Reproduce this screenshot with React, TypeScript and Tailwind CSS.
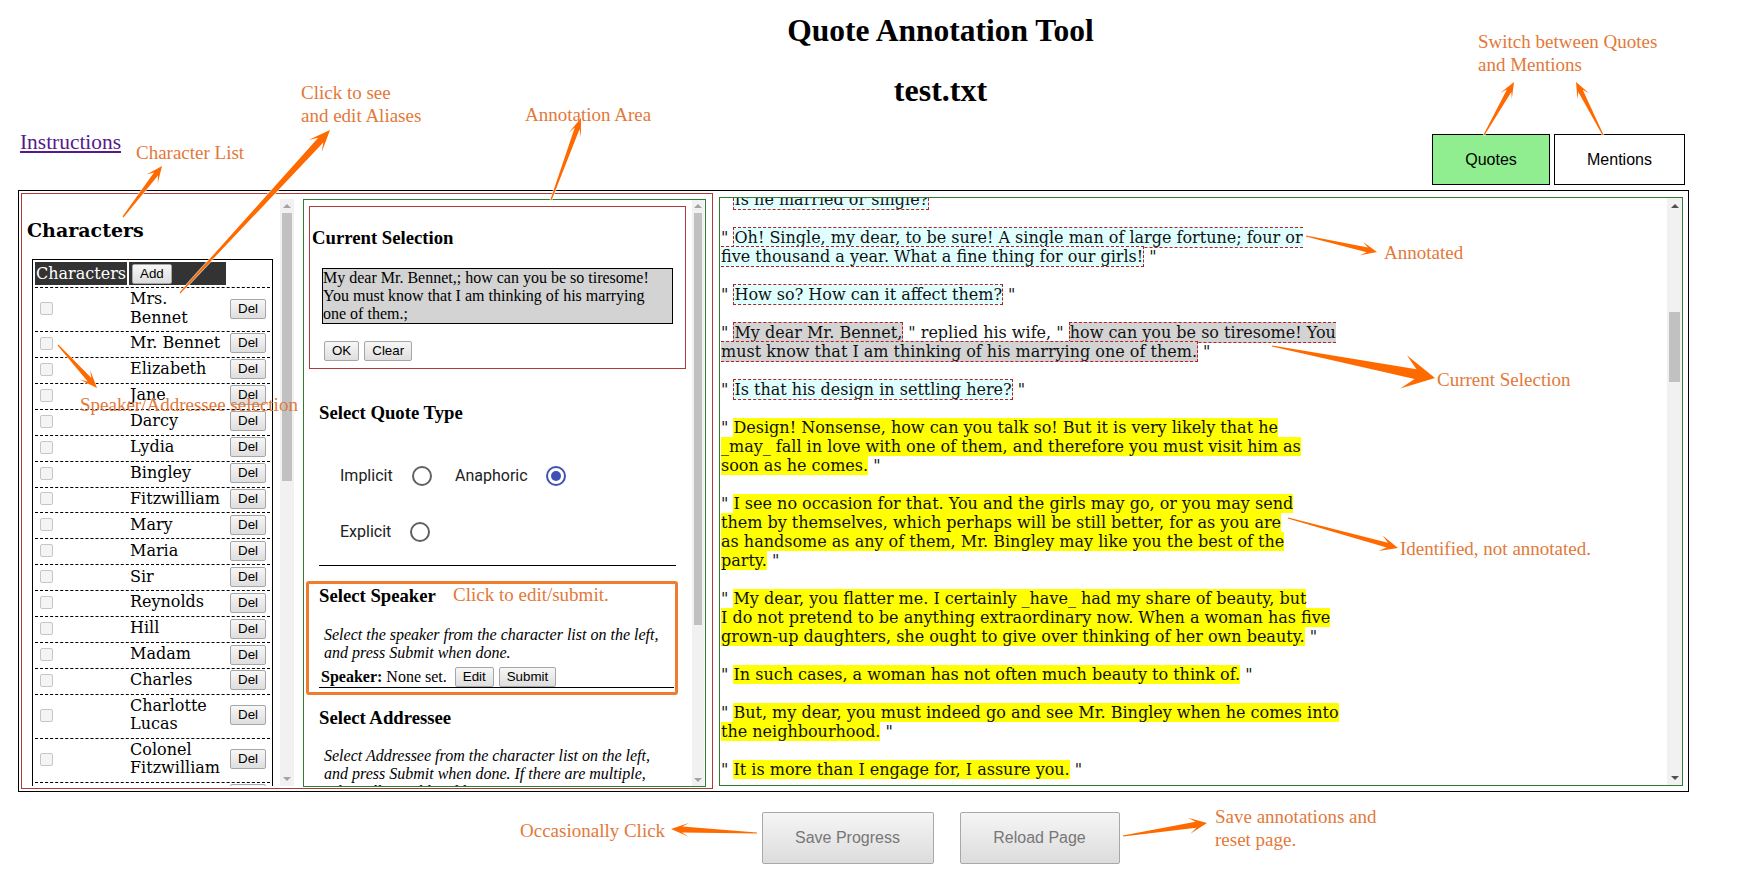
import type { ReactNode } from 'react'

type Point = [number, number]

interface ArrowSpec {
  from: Point
  to: Point
  head: number
  width: number
  shaft: number
}

// orange callout arrows drawn over the page (tail -> tip)
const arrows: ArrowSpec[] = [
  { from: [123, 217], to: [162, 166], head: 16, width: 14, shaft: 5 },
  { from: [180, 293], to: [330, 130], head: 22, width: 18, shaft: 7 },
  { from: [551, 200], to: [581, 118], head: 18, width: 13, shaft: 5 },
  { from: [58, 345], to: [97, 388], head: 18, width: 14, shaft: 5 },
  { from: [1484, 135], to: [1514, 82], head: 16, width: 13, shaft: 5 },
  { from: [1603, 135], to: [1576, 82], head: 16, width: 13, shaft: 5 },
  { from: [1306, 236], to: [1377, 252], head: 16, width: 14, shaft: 5 },
  { from: [1272, 346], to: [1435, 378], head: 32, width: 34, shaft: 10 },
  { from: [1288, 518], to: [1398, 548], head: 18, width: 16, shaft: 5 },
  { from: [757, 833], to: [671, 829], head: 18, width: 14, shaft: 6 },
  { from: [1123, 836], to: [1207, 823], head: 18, width: 16, shaft: 6 },
]

function arrowPoints({ from, to, head, width, shaft }: ArrowSpec) {
  const [x0, y0] = from
  const [x1, y1] = to
  const len = Math.hypot(x1 - x0, y1 - y0)
  const ux = (x1 - x0) / len
  const uy = (y1 - y0) / len
  const nx = -uy
  const ny = ux
  const bx = x1 - ux * head * 0.62
  const by = y1 - uy * head * 0.62
  const hx = x1 - ux * head
  const hy = y1 - uy * head
  const pts: Point[] = [
    [x0 + nx * 0.6, y0 + ny * 0.6],
    [bx + (nx * shaft) / 2, by + (ny * shaft) / 2],
    [hx + (nx * width) / 2, hy + (ny * width) / 2],
    [x1, y1],
    [hx - (nx * width) / 2, hy - (ny * width) / 2],
    [bx - (nx * shaft) / 2, by - (ny * shaft) / 2],
    [x0 - nx * 0.6, y0 - ny * 0.6],
  ]
  return pts.map((p) => p.map((v) => v.toFixed(1)).join(',')).join(' ')
}

type Kind = 'annotated' | 'current' | 'identified'
type Piece = string | { kind: Kind; lines: string[] }

const spanStyle: Record<Kind, string> = {
  annotated: 'bg-[#e0ffff] border border-dashed border-[#b22222]',
  current: 'bg-[#d3d3d3] border border-dashed border-[#b22222]',
  identified: 'bg-[#ffff00]',
}

const paragraphs: Piece[][] = [
  ['" ', { kind: 'annotated', lines: ['Is he married or single?'] }, ' "'],
  [
    '" ',
    {
      kind: 'annotated',
      lines: [
        'Oh! Single, my dear, to be sure! A single man of large fortune; four or',
        'five thousand a year. What a fine thing for our girls!',
      ],
    },
    ' "',
  ],
  ['" ', { kind: 'annotated', lines: ['How so? How can it affect them?'] }, ' "'],
  [
    '" ',
    { kind: 'current', lines: ['My dear Mr. Bennet,'] },
    ' " replied his wife, " ',
    {
      kind: 'current',
      lines: ['how can you be so tiresome! You', 'must know that I am thinking of his marrying one of them.'],
    },
    ' "',
  ],
  ['" ', { kind: 'annotated', lines: ['Is that his design in settling here?'] }, ' "'],
  [
    '" ',
    {
      kind: 'identified',
      lines: [
        'Design! Nonsense, how can you talk so! But it is very likely that he',
        '_may_ fall in love with one of them, and therefore you must visit him as',
        'soon as he comes.',
      ],
    },
    ' "',
  ],
  [
    '" ',
    {
      kind: 'identified',
      lines: [
        'I see no occasion for that. You and the girls may go, or you may send',
        'them by themselves, which perhaps will be still better, for as you are',
        'as handsome as any of them, Mr. Bingley may like you the best of the',
        'party.',
      ],
    },
    ' "',
  ],
  [
    '" ',
    {
      kind: 'identified',
      lines: [
        'My dear, you flatter me. I certainly _have_ had my share of beauty, but',
        'I do not pretend to be anything extraordinary now. When a woman has five',
        'grown-up daughters, she ought to give over thinking of her own beauty.',
      ],
    },
    ' "',
  ],
  ['" ', { kind: 'identified', lines: ['In such cases, a woman has not often much beauty to think of.'] }, ' "'],
  [
    '" ',
    {
      kind: 'identified',
      lines: ['But, my dear, you must indeed go and see Mr. Bingley when he comes into', 'the neighbourhood.'],
    },
    ' "',
  ],
  ['" ', { kind: 'identified', lines: ['It is more than I engage for, I assure you.'] }, ' "'],
  ['" ', { kind: 'identified', lines: ['What is his name?'] }, ' "'],
]

const characters: string[][] = [
  ['Mrs.', 'Bennet'],
  ['Mr. Bennet'],
  ['Elizabeth'],
  ['Jane'],
  ['Darcy'],
  ['Lydia'],
  ['Bingley'],
  ['Fitzwilliam'],
  ['Mary'],
  ['Maria'],
  ['Sir'],
  ['Reynolds'],
  ['Hill'],
  ['Madam'],
  ['Charles'],
  ['Charlotte', 'Lucas'],
  ['Colonel', 'Fitzwilliam'],
  ['Lucas'],
]

function SmallButton({ children }: { children: ReactNode }) {
  return (
    <button className="h-[20px] rounded-[2px] border border-[#a6a6a6] bg-[linear-gradient(#f7f7f7,#dedede)] px-[7px] font-['Liberation_Sans',Arial,sans-serif] text-[13.33px] leading-[18px] text-black">
      {children}
    </button>
  )
}

function Scrollbar({ className, thumbClassName, dark }: { className: string; thumbClassName: string; dark?: boolean }) {
  return (
    <div className={`flex shrink-0 flex-col bg-[#f1f1f1] ${className}`}>
      <div className="flex aspect-square items-center justify-center">
        <span
          className={`border-x-[4px] border-b-[4px] border-x-transparent ${dark ? 'border-b-[#505050]' : 'border-b-[#a3a3a3]'}`}
        />
      </div>
      <div className="flex-1 px-[2px]">
        <div className={`bg-[#c1c1c1] ${thumbClassName}`} />
      </div>
      <div className="flex aspect-square items-center justify-center">
        <span
          className={`border-x-[4px] border-t-[4px] border-x-transparent ${dark ? 'border-t-[#505050]' : 'border-t-[#a3a3a3]'}`}
        />
      </div>
    </div>
  )
}

function Radio({ checked }: { checked?: boolean }) {
  return (
    <span
      className={`flex h-[20px] w-[20px] shrink-0 items-center justify-center rounded-full border-2 ${checked ? 'border-[#3f51b5]' : 'border-[#616161]'}`}
    >
      {checked && <span className="h-[10px] w-[10px] rounded-full bg-[#3f51b5]" />}
    </span>
  )
}

function CharacterRow({ lines }: { lines: string[] }) {
  return (
    <div className="mt-[2px] flex min-h-[23.93px] items-center border-t border-dashed border-black leading-[18.5px]">
      <div className="flex w-[92px] pl-[5px]">
        <span className="block h-[13px] w-[13px] rounded-[2px] border border-[#c6c6c6] bg-[#f4f4f4]" />
      </div>
      <div className="ml-[2px] w-[97px] whitespace-nowrap py-[2px] pl-[1px]">
        {lines.map((l, i) => (
          <div key={i}>{l}</div>
        ))}
      </div>
      <div className="ml-[2px] flex flex-1 pl-[2px]">
        <SmallButton>Del</SmallButton>
      </div>
    </div>
  )
}

function CharacterPanel() {
  return (
    <div className="mt-[5px] flex h-[587px] w-[272px]">
      <div className="flex-1 overflow-hidden font-['DejaVu_Serif',serif] text-[16px]">
        <h2 className="mt-[20px] pl-[5px] text-[19px] font-bold leading-[22px]">Characters</h2>
        <div className="ml-[10px] mt-[18px] w-[241px] border-x border-t border-black px-[2px] pt-[2px]">
          <div className="flex h-[23px] gap-[2px]">
            <div className="w-[92px] bg-[#333] pl-[1px] leading-[23px] text-white">Characters</div>
            <div className="flex w-[97px] items-center bg-[#333] pl-[3px]">
              <SmallButton>Add</SmallButton>
            </div>
            <div className="flex-1" />
          </div>
          {characters.map((c, i) => (
            <CharacterRow key={i} lines={c} />
          ))}
        </div>
      </div>
      <Scrollbar className="w-[14px]" thumbClassName="h-[268px]" />
    </div>
  )
}

const heading = "font-['Liberation_Serif','Times_New_Roman',serif] text-[18.72px] font-bold leading-[22px]"

function AnnotationPanel() {
  return (
    <div className="ml-[9px] mt-[5px] flex h-[588px] w-[403px] border border-[#2e7d32]">
      <div className="flex-1 overflow-hidden font-['Liberation_Serif','Times_New_Roman',serif] text-[16px]">
        <div className="ml-[5px] mt-[6px] h-[163px] w-[377px] border border-[#b03a3a]">
          <h3 className={`ml-[2px] mt-[20px] ${heading}`}>Current Selection</h3>
          <div className="ml-[12px] mt-[19px] w-[351px] whitespace-nowrap border border-black bg-[#d3d3d3] leading-[18px]">
            My dear Mr. Bennet,; how can you be so tiresome!
            <br />
            You must know that I am thinking of his marrying
            <br />
            one of them.;
          </div>
          <div className="ml-[14px] mt-[17px] flex gap-[5px]">
            <SmallButton>OK</SmallButton>
            <SmallButton>Clear</SmallButton>
          </div>
        </div>

        <h3 className={`ml-[15px] mt-[33px] ${heading}`}>Select Quote Type</h3>
        <div className="ml-[36px] mt-[40px] flex h-[24px] items-center font-[Roboto,sans-serif] text-[16px] text-[#212121]">
          <span className="w-[72px]">Implicit</span>
          <Radio />
          <span className="ml-[23px] w-[91px]">Anaphoric</span>
          <Radio checked />
        </div>
        <div className="ml-[36px] mt-[32px] flex h-[24px] items-center font-[Roboto,sans-serif] text-[16px] text-[#212121]">
          <span className="w-[70px]">Explicit</span>
          <Radio />
        </div>
        <div className="ml-[15px] mt-[21px] w-[357px] border-t border-black" />

        <h3 className={`ml-[15px] mt-[19px] ${heading}`}>Select Speaker</h3>
        <p className="ml-[20px] mt-[19px] whitespace-nowrap italic leading-[18px]">
          Select the speaker from the character list on the left,
          <br />
          and press Submit when done.
        </p>
        <div className="ml-[15px] mt-[5px] flex h-[21px] w-[355px] items-center border-b border-black pl-[2px]">
          <span className="whitespace-nowrap">
            <b>Speaker:</b> None set.
          </span>
          <span className="ml-[8px] flex gap-[5px]">
            <SmallButton>Edit</SmallButton>
            <SmallButton>Submit</SmallButton>
          </span>
        </div>

        <h3 className={`ml-[15px] mt-[19px] ${heading}`}>Select Addressee</h3>
        <p className="ml-[20px] mt-[18px] whitespace-nowrap italic leading-[18px]">
          Select Addressee from the character list on the left,
          <br />
          and press Submit when done. If there are multiple,
          <br />
          select all possible addressees.
        </p>
      </div>
      <Scrollbar className="w-[12px]" thumbClassName="mt-[1px] h-[412px]" />
      <div className="w-[1px]" />
    </div>
  )
}

function TextPanel() {
  return (
    <div className="ml-[6px] mt-[6px] flex h-[589px] w-[964px] border border-[#2e7d32]">
      <div className="flex-1 overflow-hidden pl-[1px]">
        <div className="-mt-[8px] font-['DejaVu_Serif',serif] text-[16px] leading-[19px] text-[#111]">
          {paragraphs.map((p, i) => (
            <p key={i} className="mb-[19px] whitespace-nowrap">
              {p.map((piece, j) =>
                typeof piece === 'string' ? (
                  <span key={j}>{piece}</span>
                ) : (
                  <span key={j} className={spanStyle[piece.kind]}>
                    {piece.lines.map((l, k) => (
                      <span key={k}>
                        {k > 0 && <br />}
                        {l}
                      </span>
                    ))}
                  </span>
                ),
              )}
            </p>
          ))}
        </div>
      </div>
      <Scrollbar className="w-[15px]" thumbClassName="mt-[99px] h-[70px]" dark />
    </div>
  )
}

const label = "absolute whitespace-nowrap font-['Liberation_Serif','Times_New_Roman',serif] text-[19px] leading-[23px] text-[#e2793a]"

function Callouts() {
  return (
    <div className="pointer-events-none absolute inset-0">
      <div className="absolute left-[306px] top-[581px] h-[114px] w-[372px] rounded-[3px] border-[3px] border-[#ef7d2d]" />
      <svg className="absolute left-0 top-0" width="1754" height="877">
        {arrows.map((a, i) => (
          <polygon
            key={i}
            points={arrowPoints(a)}
            fill="#ff6a00"
            stroke="#ffffff"
            strokeOpacity="0.7"
            strokeWidth="1.5"
            strokeLinejoin="round"
            paintOrder="stroke"
          />
        ))}
      </svg>
      <div className={`${label} left-[1478px] top-[30px]`}>
        Switch between Quotes
        <br />
        and Mentions
      </div>
      <div className={`${label} left-[301px] top-[81px]`}>
        Click to see
        <br />
        and edit Aliases
      </div>
      <div className={`${label} left-[525px] top-[103px]`}>Annotation Area</div>
      <div className={`${label} left-[136px] top-[141px]`}>Character List</div>
      <div className={`${label} left-[80px] top-[393px]`}>Speaker/Addressee selection</div>
      <div className={`${label} left-[453px] top-[583px]`}>Click to edit/submit.</div>
      <div className={`${label} left-[1384px] top-[241px]`}>Annotated</div>
      <div className={`${label} left-[1437px] top-[368px]`}>Current Selection</div>
      <div className={`${label} left-[1400px] top-[537px]`}>Identified, not annotated.</div>
      <div className={`${label} left-[520px] top-[819px]`}>Occasionally Click</div>
      <div className={`${label} left-[1215px] top-[805px]`}>
        Save annotations and
        <br />
        reset page.
      </div>
    </div>
  )
}

export default function App() {
  return (
    <div className="relative h-[877px] w-[1754px] overflow-hidden bg-white text-black">
      <header className="flex h-[190px] flex-col">
        <h1 className="mt-[15px] pl-[127px] text-center font-['Liberation_Serif','Times_New_Roman',serif] text-[31.5px] font-bold leading-[32px]">
          Quote Annotation Tool
        </h1>
        <h2 className="mt-[27px] pl-[127px] text-center font-['Liberation_Serif','Times_New_Roman',serif] text-[32px] font-bold leading-[32px]">
          test.txt
        </h2>
        <div className="mt-[24px] flex items-start justify-between pl-[20px] pr-[69px]">
          <a
            href="#"
            className="font-['Liberation_Serif','Times_New_Roman',serif] text-[21.4px] leading-[24px] text-[#551a8b] underline"
          >
            Instructions
          </a>
          <div className="mt-[4px] flex gap-[4px] font-['Liberation_Sans',Arial,sans-serif] text-[16px]">
            <button className="h-[51px] w-[118px] border border-black bg-[#90ee90]">Quotes</button>
            <button className="h-[51px] w-[131px] border border-black bg-white">Mentions</button>
          </div>
        </div>
      </header>

      <div className="ml-[18px] flex h-[602px] w-[1671px] items-start border border-black">
        <div className="ml-[2px] mt-[2px] flex h-[596px] w-[692px] items-start border border-[#b03a3a]">
          <CharacterPanel />
          <AnnotationPanel />
        </div>
        <TextPanel />
      </div>

      <div className="mt-[20px] flex justify-center gap-[26px] pl-[127px] font-['Liberation_Sans',Arial,sans-serif] text-[16px] text-[#777]">
        <button className="h-[52px] w-[172px] rounded-[2px] border border-[#a8a8a8] bg-[linear-gradient(#f5f5f5,#dcdcdc)]">
          Save Progress
        </button>
        <button className="h-[52px] w-[160px] rounded-[2px] border border-[#a8a8a8] bg-[linear-gradient(#f5f5f5,#dcdcdc)]">
          Reload Page
        </button>
      </div>

      <Callouts />
    </div>
  )
}
